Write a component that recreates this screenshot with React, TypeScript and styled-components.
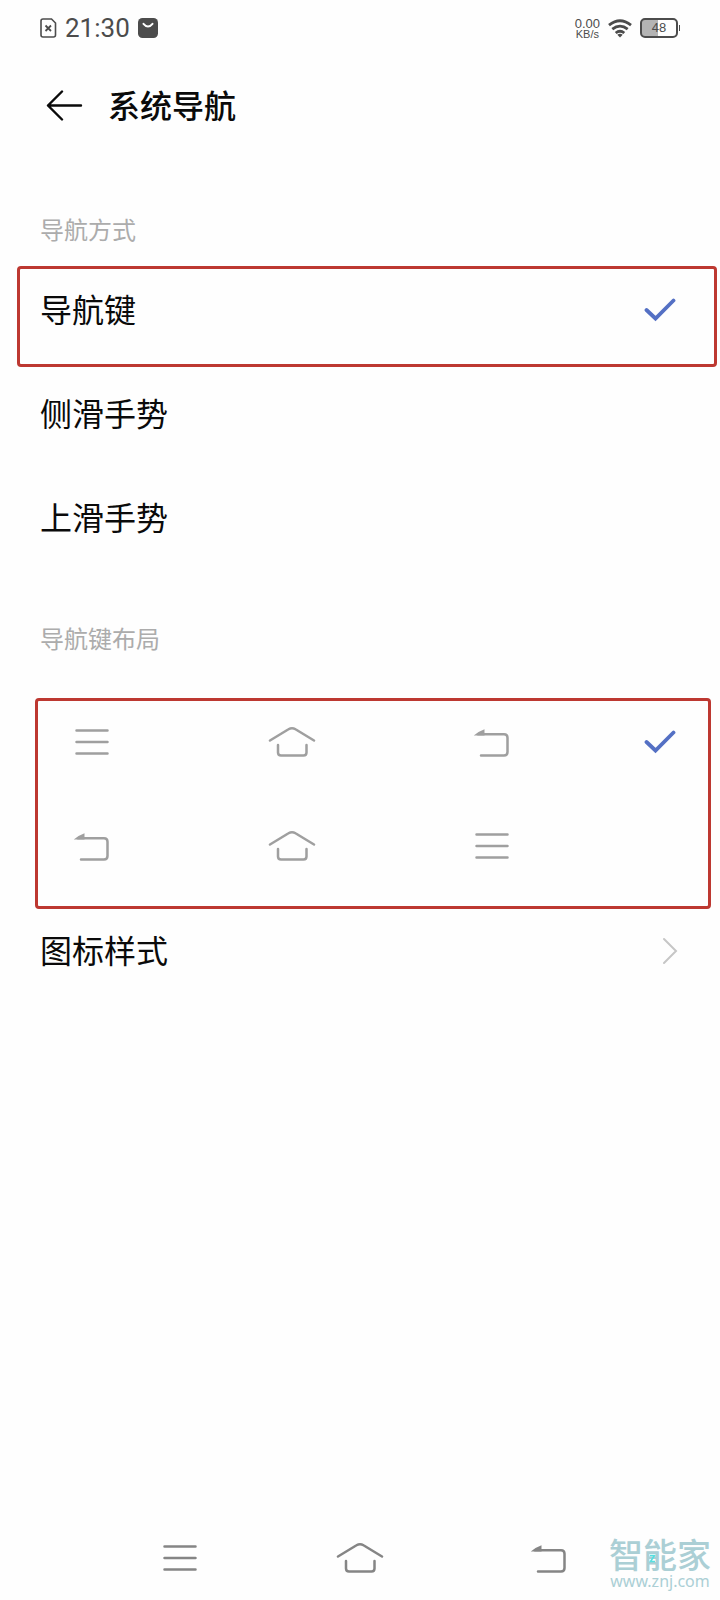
import React, { useState } from "react";
import styled, { createGlobalStyle } from "styled-components";

const GlobalStyle = createGlobalStyle`
  *, *::before, *::after { box-sizing: border-box; }
  body {
    margin: 0;
    background: #fefefe;
    color: #0a0a0a;
    font-family: "Noto Sans CJK SC", sans-serif;
  }
`;

const Page = styled.div`
  min-height: 100vh;
  display: flex;
  flex-direction: column;
  background: #fefefe;
`;

const StatusBar = styled.div`
  height: 56px;
  padding: 0 42px 0 40px;
  display: flex;
  align-items: center;
  justify-content: space-between;
  color: #4c4c4c;
`;

const StatusGroup = styled.div`
  display: flex;
  align-items: center;
  gap: 8px;
`;

const Clock = styled.time`
  font: 400 26px/32px Roboto, sans-serif;
`;

const Speed = styled.div`
  display: flex;
  flex-direction: column;
  align-items: center;
  font-family: "Liberation Sans", sans-serif;
`;

const SpeedValue = styled.span`
  font-size: 13px;
  line-height: 11px;
`;

const SpeedUnit = styled.span`
  font-size: 11px;
  line-height: 10px;
`;

const Battery = styled.div`
  position: relative;
  width: 38px;
  height: 20px;
  border: 2px solid #4c4c4c;
  border-radius: 5px;
  background: linear-gradient(to right, #b4b4b4 48%, transparent 48%);
  font: 400 13px/16px "Liberation Sans", sans-serif;
  text-align: center;

  &::after {
    content: "";
    position: absolute;
    top: 5px;
    right: -4px;
    width: 1px;
    height: 6px;
    background: #4c4c4c;
  }
`;

const Header = styled.header`
  height: 100px;
  padding: 0 44px;
  display: flex;
  align-items: center;
  gap: 23px;
`;

const IconButton = styled.button`
  display: flex;
  padding: 0;
  border: 0;
  background: none;
  color: inherit;
  cursor: pointer;
`;

const Title = styled.h1`
  margin: 0;
  padding-bottom: 4px;
  font-size: 32px;
  line-height: 40px;
  font-weight: 500;
`;

const SectionLabel = styled.h2`
  margin: 0;
  padding: 55px 40px 19px;
  font-size: 24px;
  line-height: 36px;
  font-weight: 400;
  color: #acacac;
`;

const Group = styled.div`
  display: flex;
  flex-direction: column;
`;

const Frame = styled.div<{ $inset?: boolean }>`
  display: flex;
  flex-direction: column;
  gap: 22px;
  margin: ${(p) => (p.$inset ? "23px 9px 0 35px" : "0 3px 0 17px")};
  padding: ${(p) => (p.$inset ? "0 32px 19px 31px" : "0 38px 13px 20px")};
  border: 3px solid #bd3831;
  border-radius: 4px;
`;

const PlainRows = styled.div`
  display: flex;
  flex-direction: column;
  gap: 22px;
  padding: 6px 44px 6px 40px;
`;

const Option = styled.label`
  position: relative;
  height: 82px;
  display: flex;
  align-items: center;
  justify-content: space-between;
  cursor: pointer;
`;

const RowText = styled.span`
  padding-bottom: 4px;
  font-size: 32px;
  line-height: 40px;
`;

const Radio = styled.input`
  position: absolute;
  margin: 0;
  opacity: 0;
`;

const KeyIcons = styled.span`
  flex: 1;
  display: flex;
  justify-content: space-between;
  margin-right: 129px;
  color: #9f9f9f;
`;

const CheckSlot = styled.span`
  width: 32px;
  height: 24px;
  display: flex;
`;

const LinkArea = styled.div`
  padding: 1px 42px 0 40px;
`;

const LinkRow = styled.a`
  height: 82px;
  display: flex;
  align-items: center;
  justify-content: space-between;
  color: inherit;
  text-decoration: none;
`;

const Footer = styled.footer`
  position: relative;
  margin-top: auto;
`;

const SystemNav = styled.nav`
  height: 84px;
  padding: 0 10% 0 12.5%;
  display: grid;
  grid-template-columns: 10fr 10fr 11fr;
  place-items: center;
  color: #858585;
`;

const Watermark = styled.div`
  position: absolute;
  right: 9px;
  bottom: 9px;
  display: flex;
  flex-direction: column;
  align-items: center;
  color: #abcfd5;
`;

const WatermarkName = styled.span`
  position: relative;
  font-size: 34px;
  line-height: 34px;
  font-weight: 500;
`;

const WatermarkMark = styled.svg`
  position: absolute;
  left: 40px;
  top: 17px;
`;

const WatermarkUrl = styled.span`
  font: 400 16px/20px "Noto Sans", sans-serif;
`;

const SimIcon = () => (
  <svg width="17" height="20" viewBox="0 0 17 20" fill="none" stroke="currentColor" aria-hidden="true">
    <path d="M3 1h8.500L15.500 5V17a2 2 0 0 1-2 2H3a2 2 0 0 1-2-2V3a2 2 0 0 1 2-2z" strokeWidth="1.600" />
    <path d="M5.500 7.500l5.500 5.500M11 7.500L5.500 13" strokeWidth="1.800" />
  </svg>
);

const AppBadgeIcon = () => (
  <svg width="20" height="20" viewBox="0 0 20 20" aria-hidden="true">
    <rect width="20" height="20" rx="4.500" fill="currentColor" />
    <path d="M5.500 5.800q4.500 5.400 9 0" fill="none" stroke="#fff" strokeWidth="2" strokeLinecap="round" />
  </svg>
);

const WifiIcon = () => (
  <svg width="24" height="19" viewBox="0 0 24 19" fill="none" stroke="currentColor" strokeWidth="2.800" aria-hidden="true">
    <path d="M1 6.200Q12-2.600 23 6.200" />
    <path d="M4.300 10.200q7.700-6.200 15.400 0" />
    <path d="M7.700 14q4.300-3.600 8.600 0" />
    <path d="M9.300 15.700q2.700-1.800 5.400 0L12 18.600z" fill="currentColor" stroke="none" />
  </svg>
);

const ArrowIcon = () => (
  <svg width="41" height="32" viewBox="0 0 41 32" fill="none" stroke="currentColor" strokeWidth="2.400" strokeLinecap="round" strokeLinejoin="round" aria-hidden="true">
    <path d="M37 15.500H4M18 1.500L4 15.500l14 14" />
  </svg>
);

const CheckIcon = () => (
  <svg width="32" height="24" viewBox="0 0 32 24" fill="none" stroke="#5470c4" strokeWidth="3.800" strokeLinecap="round" aria-hidden="true">
    <path d="M2.500 12l9 8.500L29.500 2.500" />
  </svg>
);

const ChevronIcon = () => (
  <svg width="16" height="28" viewBox="0 0 16 28" fill="none" stroke="#c6c6c6" strokeWidth="2" strokeLinecap="round" aria-hidden="true">
    <path d="M2 2l12 12L2 26" />
  </svg>
);

const MenuKeyIcon = () => (
  <svg width="46" height="32" viewBox="0 0 46 32" fill="none" stroke="currentColor" strokeWidth="2.500" strokeLinecap="round" aria-hidden="true">
    <path d="M7.500 4.500h31M7.500 16h31M7.500 27.500h31" />
  </svg>
);

const HomeKeyIcon = () => (
  <svg width="48" height="32" viewBox="0 0 48 32" fill="none" stroke="currentColor" strokeWidth="2.500" strokeLinecap="round" aria-hidden="true">
    <path d="M2 14.500L20.500 3.300Q24 1 27.500 3.300L46 14.500" />
    <path d="M10 19v7.500q0 3 3 3h22.500q3 0 3-3V19" />
  </svg>
);

const BackKeyIcon = () => (
  <svg width="46" height="32" viewBox="0 0 46 32" fill="none" stroke="currentColor" strokeWidth="2.500" aria-hidden="true">
    <path d="M9 8.300h26q3.500 0 3.500 3.500v14.200q0 3.500-3.500 3.500H12" strokeLinecap="round" />
    <path d="M4.800 9.500Q9 5.500 15.500 3.200v6.300z" fill="currentColor" stroke="none" />
  </svg>
);

const keyIcons = {
  menu: { label: "菜单", Icon: MenuKeyIcon },
  home: { label: "主页", Icon: HomeKeyIcon },
  back: { label: "返回", Icon: BackKeyIcon },
};

type KeyName = keyof typeof keyIcons;

const layouts: KeyName[][] = [
  ["menu", "home", "back"],
  ["back", "home", "menu"],
];

const modes = ["导航键", "侧滑手势", "上滑手势"];

export default function App() {
  const [mode, setMode] = useState(0);
  const [layout, setLayout] = useState(0);

  const renderMode = (index: number) => (
    <Option key={modes[index]}>
      <Radio type="radio" name="mode" checked={mode === index} onChange={() => setMode(index)} />
      <RowText>{modes[index]}</RowText>
      <CheckSlot>{mode === index && <CheckIcon />}</CheckSlot>
    </Option>
  );

  return (
    <Page>
      <GlobalStyle />
      <StatusBar>
        <StatusGroup>
          <SimIcon />
          <Clock>21:30</Clock>
          <AppBadgeIcon />
        </StatusGroup>
        <StatusGroup>
          <Speed>
            <SpeedValue>0.00</SpeedValue>
            <SpeedUnit>KB/s</SpeedUnit>
          </Speed>
          <WifiIcon />
          <Battery>48</Battery>
        </StatusGroup>
      </StatusBar>

      <Header>
        <IconButton type="button" aria-label="返回">
          <ArrowIcon />
        </IconButton>
        <Title>系统导航</Title>
      </Header>

      <main>
        <SectionLabel id="mode-label">导航方式</SectionLabel>
        <Group role="radiogroup" aria-labelledby="mode-label">
          <Frame>{renderMode(0)}</Frame>
          <PlainRows>
            {renderMode(1)}
            {renderMode(2)}
          </PlainRows>
        </Group>

        <SectionLabel id="layout-label">导航键布局</SectionLabel>
        <Frame $inset role="radiogroup" aria-labelledby="layout-label">
          {layouts.map((keys, index) => (
            <Option key={index}>
              <Radio
                type="radio"
                name="layout"
                aria-label={keys.map((k) => keyIcons[k].label).join("、")}
                checked={layout === index}
                onChange={() => setLayout(index)}
              />
              <KeyIcons>
                {keys.map((k) => {
                  const { Icon } = keyIcons[k];
                  return <Icon key={k} />;
                })}
              </KeyIcons>
              <CheckSlot>{layout === index && <CheckIcon />}</CheckSlot>
            </Option>
          ))}
        </Frame>

        <LinkArea>
          <LinkRow href="#icon-style">
            <RowText>图标样式</RowText>
            <ChevronIcon />
          </LinkRow>
        </LinkArea>
      </main>

      <Footer>
        <SystemNav aria-label="系统导航">
          {layouts[layout].map((k) => {
            const { label, Icon } = keyIcons[k];
            return (
              <IconButton key={k} type="button" aria-label={label}>
                <Icon />
              </IconButton>
            );
          })}
        </SystemNav>
        <Watermark>
          <WatermarkName>
            智能家
            <WatermarkMark width="7" height="9" viewBox="0 0 7 9" fill="none" stroke="#55dfe0" strokeWidth="1.600" aria-hidden="true">
              <path d="M1 1.500h4.500L1.500 7.500H6" />
            </WatermarkMark>
          </WatermarkName>
          <WatermarkUrl>www.znj.com</WatermarkUrl>
        </Watermark>
      </Footer>
    </Page>
  );
}
